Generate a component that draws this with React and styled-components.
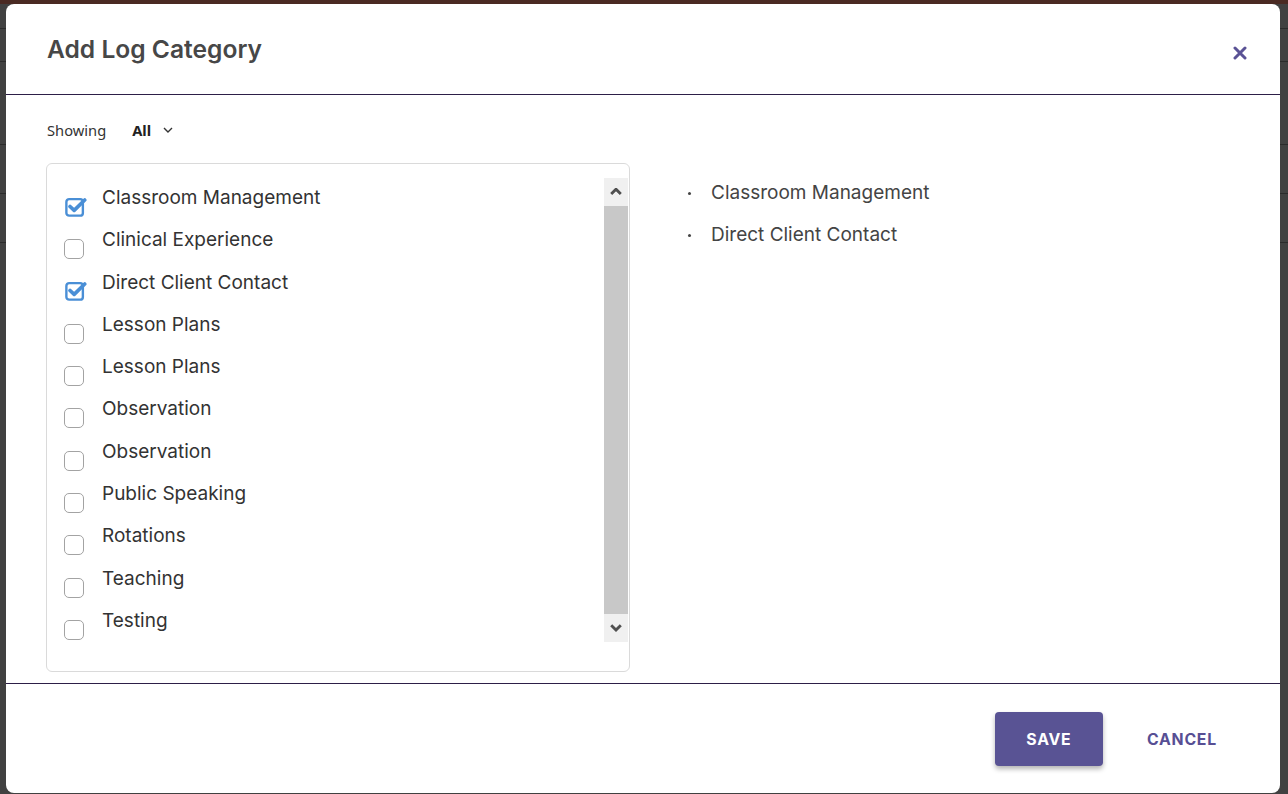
import React, { useState } from 'react';
import styled, { createGlobalStyle } from 'styled-components';

const GlobalStyle = createGlobalStyle`
  html, body { margin: 0; padding: 0; }
  body {
    font-family: Inter, "Liberation Sans", sans-serif;
    background: #414141;
    overflow: hidden;
  }
`;

const Backdrop = styled.div`
  width: 1288px;
  height: 794px;
  box-sizing: border-box;
  border-top: 4px solid #4a2a23;
  padding: 0 8px 0 6px;
  background:
    linear-gradient(#2b2b2b, #2b2b2b) 0 24px / 100% 1px no-repeat,
    linear-gradient(#2b2b2b, #2b2b2b) 0 57px / 100% 1px no-repeat,
    linear-gradient(#2b2b2b, #2b2b2b) 0 140px / 100% 1px no-repeat,
    linear-gradient(#2b2b2b, #2b2b2b) 0 189px / 100% 1px no-repeat,
    linear-gradient(#2b2b2b, #2b2b2b) 0 238px / 100% 1px no-repeat,
    #414141;
`;

const Modal = styled.div`
  height: 789px;
  background: #fff;
  border-radius: 8px;
  display: flex;
  flex-direction: column;
  overflow: hidden;
`;

const Header = styled.div`
  height: 90px;
  flex: none;
  display: flex;
  align-items: center;
  justify-content: space-between;
  padding: 0 32px 0 41px;
  border-bottom: 1px solid #2d1f48;
`;

const Title = styled.h2`
  margin: 0;
  font-size: 24.6px;
  font-weight: 600;
  color: #474747;
`;

const CloseButton = styled.button`
  border: 0;
  background: none;
  padding: 0;
  margin-top: 8px;
  width: 16px;
  height: 16px;
  display: flex;
  align-items: center;
  justify-content: center;
  cursor: pointer;
`;

const Body = styled.div`
  flex: 1;
  padding: 24px 40px 11px 40px;
  display: flex;
  flex-direction: column;
  border-bottom: 1px solid #2d1f48;
`;

const FilterRow = styled.div`
  display: flex;
  align-items: center;
  height: 22px;
  padding-left: 1px;
  margin-bottom: 22px;
`;

const FilterLabel = styled.span`
  font-family: "Noto Sans", "Open Sans", sans-serif;
  font-size: 14.7px;
  color: #333;
`;

const FilterValue = styled.span`
  margin-left: 26px;
  display: flex;
  align-items: center;
  gap: 12px;
  font-family: "Noto Sans", "Open Sans", sans-serif;
  font-size: 14.7px;
  font-weight: 700;
  color: #222;
`;

const Columns = styled.div`
  display: flex;
  flex: 1;
`;

const ListBox = styled.div`
  width: 584px;
  height: 509px;
  box-sizing: border-box;
  border: 1px solid #dadada;
  border-radius: 6px;
  display: flex;
  padding: 14px 1px 0 17px;
`;

const Items = styled.div`
  flex: 1;
  display: flex;
  flex-direction: column;
`;

const Row = styled.label`
  height: 42.3px;
  flex: none;
  display: flex;
  align-items: flex-start;
  gap: 18px;
  cursor: pointer;
`;

const Box = styled.span`
  width: 20px;
  height: 20px;
  margin-top: 19px;
  flex: none;
  box-sizing: border-box;
  border: 1px solid ${p => (p.$checked ? 'transparent' : '#a3a3a3')};
  border-radius: 5px;
  background: #fff;
  display: flex;
  align-items: center;
  justify-content: center;
`;

const ItemText = styled.span`
  font-size: 19px;
  line-height: 24px;
  padding-top: 8px;
  color: #333;
`;

const Scrollbar = styled.div`
  width: 24px;
  height: 464px;
  flex: none;
  display: flex;
  flex-direction: column;
  background: #f0f0f0;
`;

const ScrollArrow = styled.div`
  height: 28px;
  flex: none;
  display: flex;
  align-items: center;
  justify-content: center;
`;

const Thumb = styled.div`
  flex: 1;
  background: #c8c8c8;
`;

const Selected = styled.ul`
  list-style: none;
  margin: 0;
  padding: 18px 0 0 58px;
`;

const SelectedItem = styled.li`
  height: 42px;
  display: flex;
  align-items: flex-start;
  font-size: 19px;
  line-height: 24px;
  color: #444;

  &::before {
    content: '';
    width: 3px;
    height: 3px;
    border-radius: 50%;
    background: #444;
    margin: 11px 20px 0 0;
    flex: none;
  }
`;

const Footer = styled.div`
  height: 110px;
  flex: none;
  display: flex;
  align-items: center;
  justify-content: flex-end;
  gap: 28px;
  padding-right: 47px;
`;

const Button = styled.button`
  height: 54px;
  border: 0;
  border-radius: 4px;
  font-family: Inter, "Liberation Sans", sans-serif;
  font-size: 15.8px;
  font-weight: 700;
  letter-spacing: 0.8px;
  cursor: pointer;
  padding: 0 16px;
  color: ${p => (p.$primary ? '#fff' : '#574f94')};
  background: ${p => (p.$primary ? '#595394' : 'transparent')};
  box-shadow: ${p => (p.$primary ? '0 3px 5px rgba(0,0,0,0.3)' : 'none')};
  width: ${p => (p.$primary ? '108px' : 'auto')};
`;

const categories = [
  'Classroom Management',
  'Clinical Experience',
  'Direct Client Contact',
  'Lesson Plans',
  'Lesson Plans',
  'Observation',
  'Observation',
  'Public Speaking',
  'Rotations',
  'Teaching',
  'Testing',
];

const CheckIcon = () => (
  <svg width="24" height="24" viewBox="0 0 24 24" style={{ marginTop: -3, marginRight: -4 }}>
    <rect x="1.5" y="4.5" width="18" height="18" rx="3" fill="#fff" stroke="#4a8fd6" strokeWidth="2.6" />
    <path d="M5.5 12.5 L10 16.8 L21.5 5.5" fill="none" stroke="#4a8fd6" strokeWidth="4" strokeLinecap="round" strokeLinejoin="round" />
  </svg>
);

const Chevron = ({ up, size = 10, color = '#555', width = 2 }) => (
  <svg width={size} height={size * 0.6} viewBox="0 0 10 6">
    <path d={up ? 'M1 5 L5 1 L9 5' : 'M1 1 L5 5 L9 1'} fill="none" stroke={color} strokeWidth={width} />
  </svg>
);

export default function App() {
  const [checked, setChecked] = useState([0, 2]);

  const toggle = i =>
    setChecked(c => (c.includes(i) ? c.filter(x => x !== i) : [...c, i].sort((a, b) => a - b)));

  return (
    <>
      <GlobalStyle />
      <Backdrop>
        <Modal>
          <Header>
            <Title>Add Log Category</Title>
            <CloseButton aria-label="Close">
              <svg width="14" height="14" viewBox="0 0 14 14">
                <path d="M2 2 L12 12 M12 2 L2 12" stroke="#5a5295" strokeWidth="3" strokeLinecap="round" />
              </svg>
            </CloseButton>
          </Header>
          <Body>
            <FilterRow>
              <FilterLabel>Showing</FilterLabel>
              <FilterValue>
                All
                <Chevron size={10} color="#333" width={1.4} />
              </FilterValue>
            </FilterRow>
            <Columns>
              <ListBox>
                <Items>
                  {categories.map((c, i) => (
                    <Row key={i} onClick={() => toggle(i)}>
                      <Box $checked={checked.includes(i)}>
                        {checked.includes(i) && <CheckIcon />}
                      </Box>
                      <ItemText>{c}</ItemText>
                    </Row>
                  ))}
                </Items>
                <Scrollbar>
                  <ScrollArrow>
                    <Chevron up size={12} color="#505050" width={2.4} />
                  </ScrollArrow>
                  <Thumb />
                  <ScrollArrow>
                    <Chevron size={12} color="#505050" width={2.4} />
                  </ScrollArrow>
                </Scrollbar>
              </ListBox>
              <Selected>
                {checked.map(i => (
                  <SelectedItem key={i}>{categories[i]}</SelectedItem>
                ))}
              </Selected>
            </Columns>
          </Body>
          <Footer>
            <Button $primary>SAVE</Button>
            <Button>CANCEL</Button>
          </Footer>
        </Modal>
      </Backdrop>
    </>
  );
}
